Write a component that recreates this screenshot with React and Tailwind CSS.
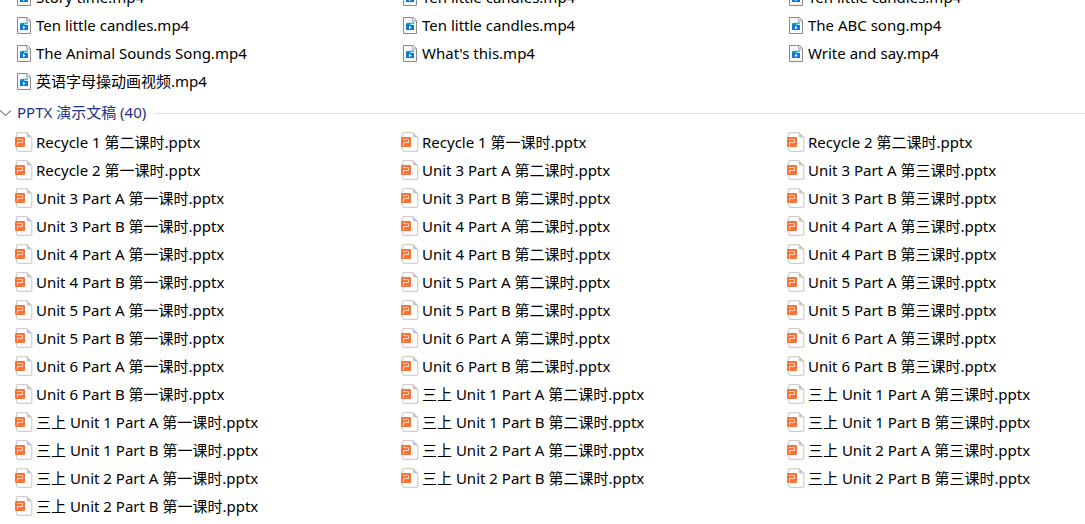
import React, { useState } from 'react';

const videoFiles = [
  'Story time.mp4',
  'Ten little candles.mp4',
  'Ten little candles.mp4',
  'Ten little candles.mp4',
  'Ten little candles.mp4',
  'The ABC song.mp4',
  'The Animal Sounds Song.mp4',
  "What's this.mp4",
  'Write and say.mp4',
  '英语字母操动画视频.mp4',
];

const slideFiles = [
  'Recycle 1 第二课时.pptx',
  'Recycle 1 第一课时.pptx',
  'Recycle 2 第二课时.pptx',
  'Recycle 2 第一课时.pptx',
  'Unit 3 Part A 第二课时.pptx',
  'Unit 3 Part A 第三课时.pptx',
  'Unit 3 Part A 第一课时.pptx',
  'Unit 3 Part B 第二课时.pptx',
  'Unit 3 Part B 第三课时.pptx',
  'Unit 3 Part B 第一课时.pptx',
  'Unit 4 Part A 第二课时.pptx',
  'Unit 4 Part A 第三课时.pptx',
  'Unit 4 Part A 第一课时.pptx',
  'Unit 4 Part B 第二课时.pptx',
  'Unit 4 Part B 第三课时.pptx',
  'Unit 4 Part B 第一课时.pptx',
  'Unit 5 Part A 第二课时.pptx',
  'Unit 5 Part A 第三课时.pptx',
  'Unit 5 Part A 第一课时.pptx',
  'Unit 5 Part B 第二课时.pptx',
  'Unit 5 Part B 第三课时.pptx',
  'Unit 5 Part B 第一课时.pptx',
  'Unit 6 Part A 第二课时.pptx',
  'Unit 6 Part A 第三课时.pptx',
  'Unit 6 Part A 第一课时.pptx',
  'Unit 6 Part B 第二课时.pptx',
  'Unit 6 Part B 第三课时.pptx',
  'Unit 6 Part B 第一课时.pptx',
  '三上 Unit 1 Part A 第二课时.pptx',
  '三上 Unit 1 Part A 第三课时.pptx',
  '三上 Unit 1 Part A 第一课时.pptx',
  '三上 Unit 1 Part B 第二课时.pptx',
  '三上 Unit 1 Part B 第三课时.pptx',
  '三上 Unit 1 Part B 第一课时.pptx',
  '三上 Unit 2 Part A 第二课时.pptx',
  '三上 Unit 2 Part A 第三课时.pptx',
  '三上 Unit 2 Part A 第一课时.pptx',
  '三上 Unit 2 Part B 第二课时.pptx',
  '三上 Unit 2 Part B 第三课时.pptx',
  '三上 Unit 2 Part B 第一课时.pptx',
];

function VideoIcon() {
  return (
    <svg className="h-5 w-5 shrink-0" viewBox="0 0 20 20" fill="none" aria-hidden="true">
      <path d="M4.5 2.5h10l3 3v13h-13z" fill="#fafafa" stroke="#8a8a8a" />
      <path d="M13.5 2.5v3.5h4" fill="#ececec" stroke="#a5a5a5" />
      <path d="M7 8.5 15 7v2L7 10.500z" fill="#36c1ea" />
      <path d="M7 10h8v5H7z" fill="#0f7bd0" />
      <path d="M7 8.500 11 7.800v2.200H7z" fill="#1686d9" />
      <path d="M10 10.800v3.400l2.600-1.700z" fill="#fff" />
    </svg>
  );
}

function SlideIcon() {
  return (
    <svg className="h-5 w-5 shrink-0" viewBox="0 0 20 20" fill="none" aria-hidden="true">
      <path
        d="M4.5.6h9.3l5 5V17.400a2 2 0 0 1-2 2H5.500a2 2 0 0 1-2-2V1.600a1 1 0 0 1 1-1z"
        fill="#fff"
        stroke="#cfcfcf"
        strokeWidth="1.2"
      />
      <path d="M13.800.6v3.500a1.500 1.500 0 0 0 1.500 1.500h3.500z" fill="#c6c6c6" />
      <rect x="2" y="5" width="10" height="10" rx="1" fill="#f4743b" />
      <path d="M4.500 13.500v-3h5v-3H4" stroke="#ffd3bd" strokeWidth="1" />
    </svg>
  );
}

function FileGrid({ files, icon: Icon }) {
  return (
    <ul className="grid grid-cols-[386px_386px_1fr] pl-[13px]">
      {files.map((name, index) => (
        <li key={index} className="flex h-7 items-center gap-[3px] whitespace-nowrap">
          <Icon />
          <span>{name}</span>
        </li>
      ))}
    </ul>
  );
}

function App() {
  const [open, setOpen] = useState(true);

  return (
    <main className="h-screen overflow-hidden bg-white font-['Noto_Sans','Noto_Sans_CJK_SC',sans-serif] text-[15px] leading-5 text-black">
      {/* the list is scrolled part of the way down its first row */}
      <div className="-mt-[17px]">
        <FileGrid files={videoFiles} icon={VideoIcon} />

        <section>
          <button
            type="button"
            aria-expanded={open}
            onClick={() => setOpen(!open)}
            className="flex h-[33px] w-full items-center text-[#1e3287]"
          >
            <svg className="mr-[5px] h-3 w-3 shrink-0" viewBox="0 0 12 12" fill="none" aria-hidden="true">
              <path d="M0 4.500 5.500 9.500 11 4.500" stroke="#8a8a8a" strokeWidth="1.2" />
            </svg>
            <span className="whitespace-nowrap">PPTX 演示文稿 ({slideFiles.length})</span>
            <span className="mt-1 ml-2 h-px flex-1 bg-[#e2e2e2]" />
          </button>

          {open && <FileGrid files={slideFiles} icon={SlideIcon} />}
        </section>
      </div>
    </main>
  );
}

export default App;
